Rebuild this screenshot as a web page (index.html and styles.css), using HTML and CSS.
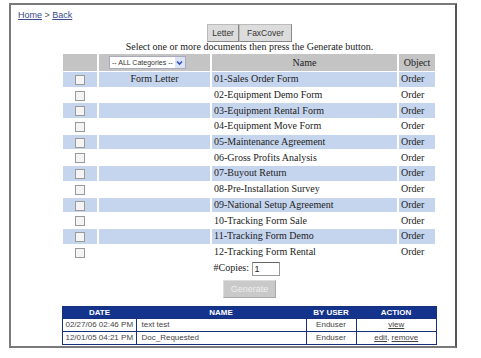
FILE: index.html
```html
<!DOCTYPE html>
<html lang="en">
<head>
    <meta charset="UTF-8">
    <title>Generate Documents</title>
    <link rel="stylesheet" href="styles.css">
</head>
<body>

<div class="frame">
    <div class="crumbs"><a href="#">Home</a> &gt; <a href="#">Back</a></div>

    <div class="content">
        <div class="tabs">
            <span class="tab tab-letter">Letter</span><span class="tab tab-fax">FaxCover</span>
        </div>
        <p class="intro">Select one or more documents then press the Generate button.</p>

        <table class="docs">
            <tr class="head">
                <td class="chk"></td>
                <td class="cat">
                    <span class="select">-- ALL Categories --<span class="arrow"><svg width="9" height="9" viewBox="0 0 9 9"><path d="M2 3.5 L4.5 6 L7 3.5" fill="none" stroke="#2a52be" stroke-width="1.6"/></svg></span></span>
                </td>
                <td class="name">Name</td>
                <td class="obj">Object</td>
            </tr>
            <tr class="alt"><td class="chk"><span class="box"></span></td><td class="cat">Form Letter</td><td>01-Sales Order Form</td><td>Order</td></tr>
            <tr><td class="chk"><span class="box"></span></td><td class="cat"></td><td>02-Equipment Demo Form</td><td>Order</td></tr>
            <tr class="alt"><td class="chk"><span class="box"></span></td><td class="cat"></td><td>03-Equipment Rental Form</td><td>Order</td></tr>
            <tr><td class="chk"><span class="box"></span></td><td class="cat"></td><td>04-Equipment Move Form</td><td>Order</td></tr>
            <tr class="alt"><td class="chk"><span class="box"></span></td><td class="cat"></td><td>05-Maintenance Agreement</td><td>Order</td></tr>
            <tr><td class="chk"><span class="box"></span></td><td class="cat"></td><td>06-Gross Profits Analysis</td><td>Order</td></tr>
            <tr class="alt"><td class="chk"><span class="box"></span></td><td class="cat"></td><td>07-Buyout Return</td><td>Order</td></tr>
            <tr><td class="chk"><span class="box"></span></td><td class="cat"></td><td>08-Pre-Installation Survey</td><td>Order</td></tr>
            <tr class="alt"><td class="chk"><span class="box"></span></td><td class="cat"></td><td>09-National Setup Agreement</td><td>Order</td></tr>
            <tr><td class="chk"><span class="box"></span></td><td class="cat"></td><td>10-Tracking Form Sale</td><td>Order</td></tr>
            <tr class="alt"><td class="chk"><span class="box"></span></td><td class="cat"></td><td>11-Tracking Form Demo</td><td>Order</td></tr>
            <tr><td class="chk"><span class="box"></span></td><td class="cat"></td><td>12-Tracking Form Rental</td><td>Order</td></tr>
        </table>

        <div class="copies">#Copies: <span class="field">1</span></div>
        <div class="gen-row"><span class="gen">Generate</span></div>

        <table class="history">
            <tr>
                <th class="h-date">DATE</th>
                <th class="h-name">NAME</th>
                <th class="h-user">BY USER</th>
                <th class="h-act">ACTION</th>
            </tr>
            <tr>
                <td>02/27/06 02:46 PM</td>
                <td class="left">text test</td>
                <td>Enduser</td>
                <td><a href="#">view</a></td>
            </tr>
            <tr>
                <td>12/01/05 04:21 PM</td>
                <td class="left">Doc_Requested</td>
                <td>Enduser</td>
                <td><a href="#">edit</a>, <a href="#">remove</a></td>
            </tr>
        </table>
    </div>
</div>

</body>
</html>
```

FILE: styles.css
```css
body {
    margin: 0;
    background-color: #ffffff;
    font-family: "Liberation Serif", "Times New Roman", serif;
    color: #222;
}

.frame {
    margin: 3px 0 0 9px;
    width: 444px;
    height: 341px;
    border: 2px solid #7a7a7a;
    border-right-color: #555;
}

.crumbs {
    font-family: "Liberation Sans", Arial, sans-serif;
    font-size: 9px;
    color: #556;
    padding: 5px 0 0 7px;
}

.crumbs a {
    color: #3a4a8a;
}

.content {
    width: 375px;
    margin: 0 0 0 51px;
}

.tabs {
    text-align: center;
    margin-top: 2px;
    height: 19px;
}

.tab {
    display: inline-block;
    font-family: "Liberation Sans", Arial, sans-serif;
    font-size: 8.5px;
    color: #333;
    background-color: #dcdcdc;
    border: 1px solid #bbb;
    border-right-color: #888;
    border-bottom-color: #888;
    padding: 3px 4px;
    line-height: 10px;
}

.tab-fax {
    padding: 3px 7px;
}

.intro {
    margin: 0;
    text-align: center;
    font-size: 10px;
    line-height: 12px;
}

.docs {
    width: 376px;
    border-spacing: 2px 1px;
    margin: 0 -1px;
    font-size: 10px;
}

.docs td {
    height: 14.7px;
    padding: 0 2px;
    line-height: 12px;
}

.docs .head td {
    background-color: #c4c4c4;
    height: 17px;
    text-align: center;
}

.docs .head .cat {
    text-align: left;
}

.docs .alt td {
    background-color: #c6d5ee;
}

.docs .chk {
    width: 30px;
    text-align: center;
}

.docs .cat {
    width: 107px;
    text-align: center;
}

.docs .obj {
    width: 32px;
}

.box {
    display: inline-block;
    width: 8px;
    height: 8px;
    border: 1px solid #9a9a9a;
    background-color: #f4f4f4;
    vertical-align: middle;
}

.select {
    display: inline-block;
    margin-left: 8px;
    font-family: "Liberation Sans", Arial, sans-serif;
    font-size: 7px;
    color: #333;
    background-color: #fff;
    border: 1px solid #aab;
    padding: 0 0 0 2px;
    line-height: 11px;
    text-align: left;
}

.arrow {
    display: inline-block;
    width: 10px;
    height: 11px;
    margin-left: 2px;
    background-color: #dbe4f5;
    vertical-align: top;
}

.arrow svg {
    display: block;
    margin: 1px 0 0 0;
}

.copies {
    text-align: center;
    font-size: 10px;
    margin-top: 2px;
    padding-right: 6px;
}

.field {
    display: inline-block;
    width: 24px;
    height: 12px;
    border: 1px solid #999;
    border-top-color: #666;
    font-family: "Liberation Sans", Arial, sans-serif;
    font-size: 9px;
    line-height: 12px;
    padding-left: 2px;
    vertical-align: middle;
    text-align: left;
}

.gen-row {
    text-align: center;
    margin-top: 2px;
    height: 18px;
}

.gen {
    display: inline-block;
    font-family: "Liberation Sans", Arial, sans-serif;
    font-size: 9px;
    color: #eee;
    background-color: #c9c9c9;
    border: 1px solid #ddd;
    border-right-color: #aaa;
    border-bottom-color: #aaa;
    padding: 3px 7px;
    line-height: 10px;
}

.history {
    width: 375px;
    margin-top: 10px;
    border-collapse: collapse;
    border: 1px solid #16307a;
    font-family: "Liberation Sans", Arial, sans-serif;
    font-size: 8px;
    color: #444;
}

.history th {
    background-color: #13338c;
    color: #fff;
    font-weight: bold;
    height: 11px;
    padding: 0;
    line-height: 10px;
}

.history td {
    border: 1px solid #16307a;
    text-align: center;
    height: 12px;
    padding: 0 2px;
    line-height: 10px;
}

.history td.left {
    text-align: left;
    padding-left: 5px;
}

.history a {
    color: #444;
}

.h-date { width: 73px; }
.h-user { width: 50px; }
.h-act { width: 80px; }
```
